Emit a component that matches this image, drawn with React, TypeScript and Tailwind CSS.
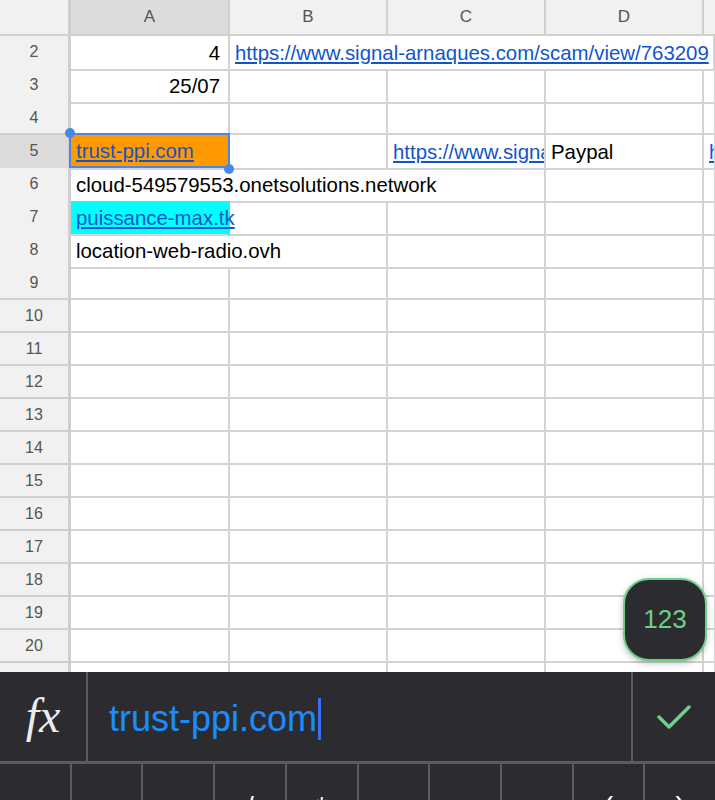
import React from 'react';

const COLS = ['A', 'B', 'C', 'D'];
const rows = Array.from({ length: 20 }, (_, i) => i + 2);

const sans = { fontFamily: '"Liberation Sans", Arial, sans-serif' };
const line = 'border-r-2 border-b-2 border-[#d3d3d3]';

function RowHead({ n, active }: { n: number; active?: boolean }) {
  return (
    <div
      className={`flex items-center justify-center border-b-2 border-r-[3px] border-[#cfcfcf] text-[16px] text-[#555] ${
        active ? 'bg-[#dcdcdc]' : 'bg-[#f1f1f1]'
      }`}
    >
      {n}
    </div>
  );
}

function Link({ children }: { children: React.ReactNode }) {
  return <span className="text-[#1155cc] underline underline-offset-2">{children}</span>;
}

function Cell({ className = '', children }: { className?: string; children?: React.ReactNode }) {
  return (
    <div className={`${line} flex items-center whitespace-nowrap px-[5px] pt-[2px] text-[20.4px] text-black ${className}`}>
      {children}
    </div>
  );
}

function Row({ n }: { n: number }) {
  let cells: React.ReactNode;
  if (n === 2) {
    cells = (
      <>
        <Cell className="justify-end pr-2">4</Cell>
        <Cell className="col-span-4 overflow-hidden border-r-0">
          <Link>https://www.signal-arnaques.com/scam/view/763209</Link>
        </Cell>
      </>
    );
  } else if (n === 3) {
    cells = (
      <>
        <Cell className="justify-end pr-2">25/07</Cell>
        <Cell />
        <Cell />
        <Cell />
        <Cell />
      </>
    );
  } else if (n === 5) {
    cells = (
      <>
        <div className={`${line} relative`}>
          <div className="absolute -inset-x-[2px] -top-[2px] bottom-0 z-10 flex items-center border-2 border-[#4a86e8] bg-[#ff9900] px-[5px] pt-[2px] text-[20.4px]">
            <Link>trust-ppi.com</Link>
          </div>
          <span className="absolute -left-[6px] -top-[7px] z-20 size-[10px] rounded-full bg-[#4a86e8]" />
          <span className="absolute -bottom-[6px] -right-[6px] z-20 size-[10px] rounded-full bg-[#4a86e8]" />
        </div>
        <Cell />
        <Cell className="overflow-hidden">
          <Link>https://www.signa</Link>
        </Cell>
        <Cell>Paypal</Cell>
        <Cell className="overflow-hidden">
          <Link>h</Link>
        </Cell>
      </>
    );
  } else if (n === 6) {
    cells = (
      <>
        <Cell className="col-span-3">cloud-549579553.onetsolutions.network</Cell>
        <Cell />
        <Cell />
      </>
    );
  } else if (n === 7) {
    cells = (
      <>
        <Cell className="border-r-[#00ffff] bg-[#00ffff]">
          <Link>puissance-max.tk</Link>
        </Cell>
        <Cell />
        <Cell />
        <Cell />
        <Cell />
      </>
    );
  } else if (n === 8) {
    cells = (
      <>
        <Cell className="col-span-2">location-web-radio.ovh</Cell>
        <Cell />
        <Cell />
        <Cell />
      </>
    );
  } else {
    cells = (
      <>
        <Cell />
        <Cell />
        <Cell />
        <Cell />
        <Cell />
      </>
    );
  }
  return (
    <div className="grid h-[33px] grid-cols-[71px_159px_158px_158px_158px_1fr]">
      <RowHead n={n} active={n === 5} />
      {cells}
    </div>
  );
}

const keys = ['=', '+', '-', '/', '*', ',', '.', ':', '(', ')'];

export default function App() {
  return (
    <div className="relative h-[800px] w-[715px] overflow-hidden bg-white" style={sans}>
      <div className="h-[672px] overflow-hidden">
        <div className="grid h-[36px] grid-cols-[71px_159px_158px_158px_158px_1fr] text-[17px] text-[#555]">
          <div className="border-b-2 border-r-[3px] border-[#cfcfcf] bg-[#f1f1f1]" />
          {COLS.map((c) => (
            <div
              key={c}
              className={`flex items-center justify-center border-b-2 border-r-2 border-[#d0d0d0] ${
                c === 'A' ? 'bg-[#dcdcdc]' : 'bg-[#f1f1f1]'
              }`}
            >
              {c}
            </div>
          ))}
          <div className="border-b-2 border-[#d0d0d0] bg-[#f1f1f1]" />
        </div>
        {rows.map((n) => (
          <Row key={n} n={n} />
        ))}
      </div>

      <button className="absolute left-[623px] top-[578px] flex h-[83px] w-[84px] items-center justify-center rounded-[26px] border-2 border-[#6ccf8a] bg-[#2c2c30] text-[26px] text-[#6ccf8a] shadow-[0_2px_6px_rgba(0,0,0,0.25)]">
        123
      </button>

      <div className="flex h-[92px] border-b-[3px] border-[#5b5b60] bg-[#2c2c30]">
        <div
          className="flex w-[88px] items-center justify-center border-r-2 border-[#5b5b60] pb-[2px] text-[48px] italic text-[#ececec]"
          style={{ fontFamily: '"Liberation Serif", "Times New Roman", serif' }}
        >
          fx
        </div>
        <div className="flex flex-1 items-center pl-[21px] pt-[4px] text-[36px] text-[#1a8cff]">
          trust-ppi.com
          <span className="ml-[1px] h-[42px] w-[3px] bg-[#3d6df2]" />
        </div>
        <div className="flex w-[84px] items-center justify-center border-l-2 border-[#5b5b60]">
          <svg width="34" height="26" viewBox="0 0 34 26" fill="none">
            <path d="M2 13 L12 23 L32 3" stroke="#6ccf8a" strokeWidth="3.5" strokeLinecap="round" strokeLinejoin="round" />
          </svg>
        </div>
      </div>

      <div className="flex h-[70px] gap-[2px] bg-[#5b5b60]">
        {keys.map((k) => (
          <div key={k} className="flex flex-1 justify-center bg-[#2c2c30] pt-[29px] text-[28px] leading-[28px] text-white">
            {k}
          </div>
        ))}
      </div>
    </div>
  );
}
